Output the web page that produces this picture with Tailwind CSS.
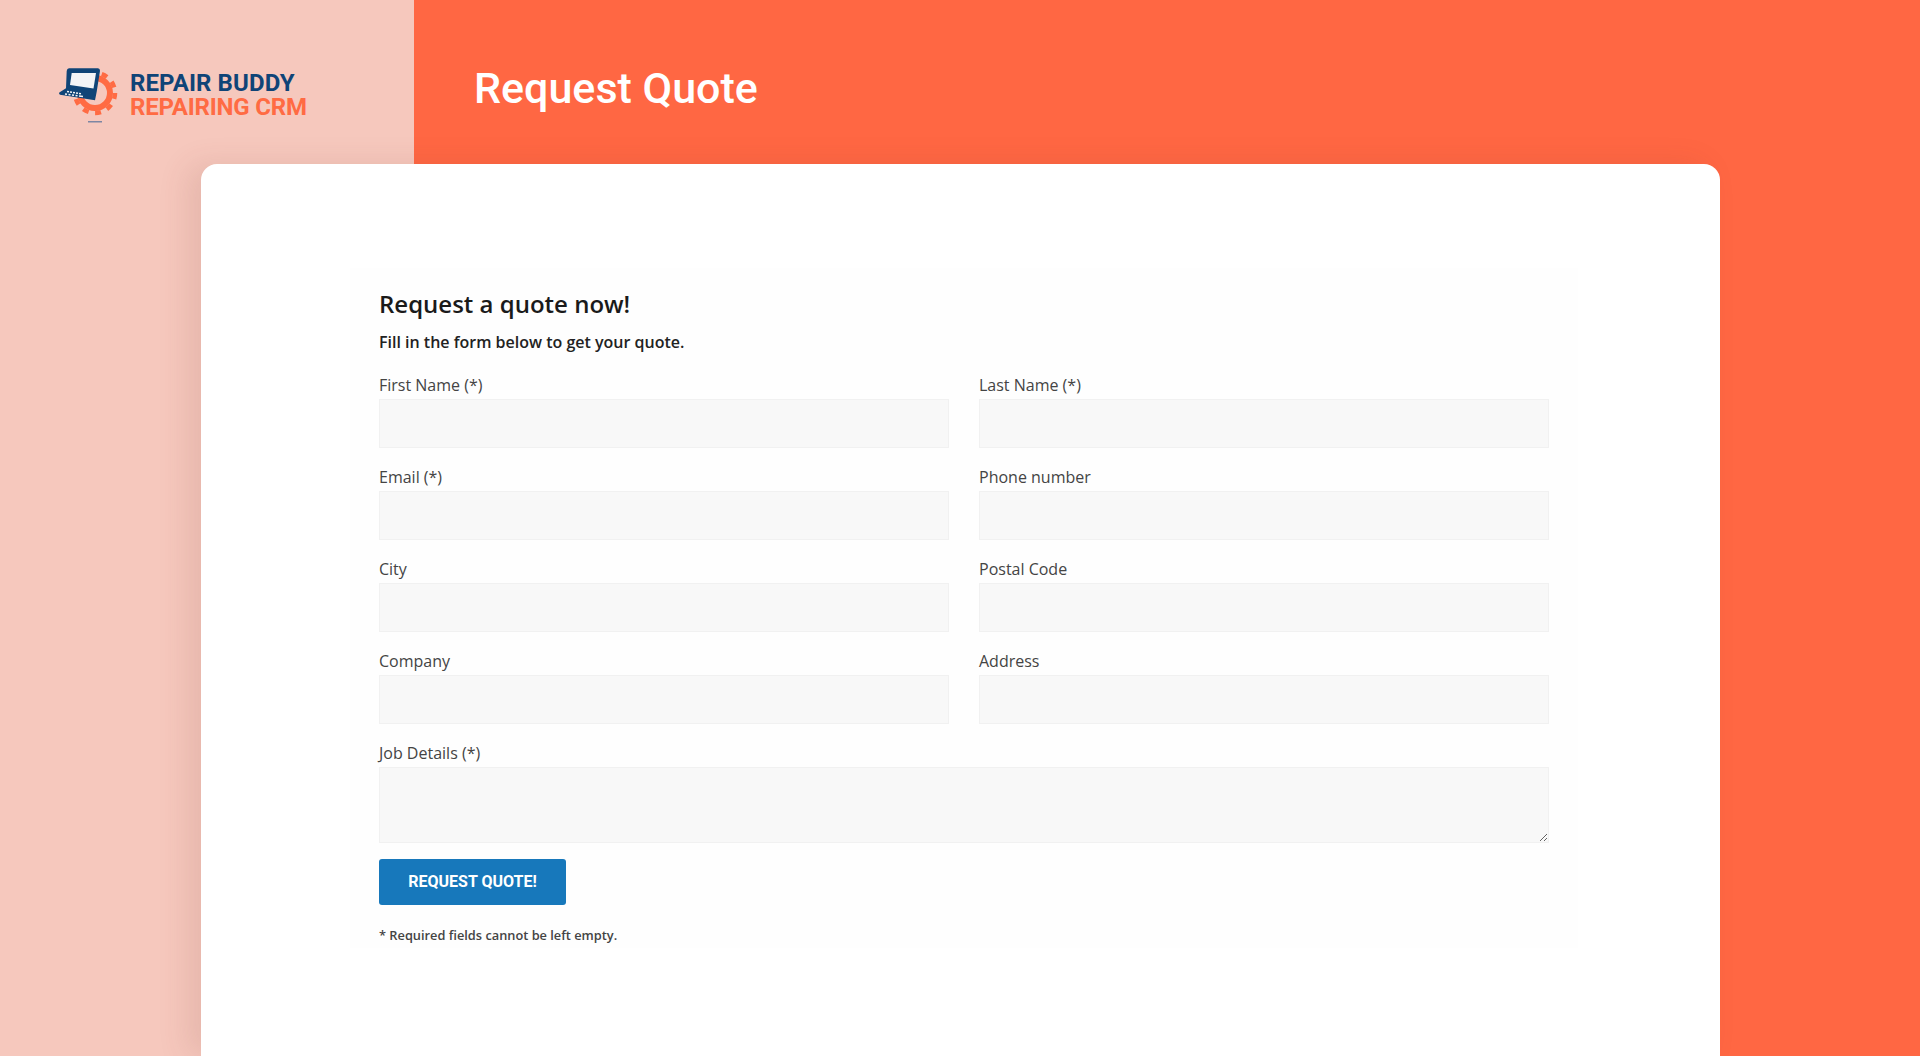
<!doctype html>
<html>

<head>
	<meta charset="UTF-8">
	<meta name="viewport" content="width=device-width, initial-scale=1.0">
	<script src="https://cdn.jsdelivr.net/npm/@tailwindcss/browser@4"></script>
</head>

<body class="h-[1056px] overflow-hidden font-['Open_Sans',sans-serif] bg-[linear-gradient(to_right,#f6c8bd_414px,#ff6743_414px)]">
	<!--header: logo on the pale side, page title on the orange side-->
	<header class="flex h-[164px]">
		<div class="w-[414px] pl-[58px] pt-[67px] flex items-start">
			<svg class="w-[62px] h-[58px] shrink-0" viewBox="0 0 62 58">
				<circle cx="37" cy="26" r="15" fill="none" stroke="#ff6b43" stroke-width="6"/>
				<circle cx="37" cy="26" r="20" fill="none" stroke="#ff6b43" stroke-width="4.500" stroke-dasharray="6 6.560"/>
				<path d="M11 1.300H40q2 0 2 2.500l-3.300 21-1.700 8.500-35-5.500q-1.500-1-.7-2.300L8 21.300 8.700 4q.3-2.700 2.300-2.700z" fill="#0f4477"/>
				<path d="M13.700 6H38L35.500 21.500 12 18z" fill="#f3f4f6"/>
				<path d="M9 24.500l2 .3m1 .2l2 .3m1 .2l2 .3m1 .2l2 .3m1 .2l2 .3M7 27l2 .3m1.500 .2l2 .3m1.500 .2l2 .3m1.500 .2l2 .3m1.500 .2l4 .5" stroke="#f3f4f6" stroke-width="1.600" fill="none"/>
				<rect x="30" y="54" width="14" height="1.500" fill="#7d86a3"/>
			</svg>
			<div class="ml-[10px] mt-[4px] font-['Roboto',sans-serif] font-bold text-[24px] leading-[24px]">
				<div class="text-[#0f4477] tracking-[0.1px]">REPAIR BUDDY</div>
				<div class="text-[#ff6b43] tracking-[-0.2px]">REPAIRING CRM</div>
			</div>
		</div>
		<h1 class="pl-[60px] pt-[60px] font-['Roboto',sans-serif] font-medium text-[43px] leading-[56px] text-white">Request Quote</h1>
	</header>

	<!--white card, hangs over both background colours-->
	<main class="ml-[201px] w-[1519px] h-[892px] rounded-t-[16px] bg-white shadow-[-14px_0_30px_rgba(120,60,50,0.12)] pt-[104px] pl-[149px]">
		<form class="w-[1228px] h-[680px] bg-[#fefefe] px-[29px] pt-[20px]">
			<h2 class="text-[24px] leading-[32px] font-semibold text-[#1a1a1a]">Request a quote now!</h2>
			<p class="mt-[10px] text-[16px] leading-[24px] font-semibold text-[#222]">Fill in the form below to get your quote.</p>

			<div class="mt-[19px] grid grid-cols-2 gap-x-[30px] gap-y-[17px]">
				<div>
					<label class="block pb-[2px] text-[16px] leading-[24px] text-[#444]">First Name (*)</label>
					<input class="block w-full h-[49px] bg-[#f8f8f8] border border-[#f1f1f1]">
				</div>
				<div>
					<label class="block pb-[2px] text-[16px] leading-[24px] text-[#444]">Last Name (*)</label>
					<input class="block w-full h-[49px] bg-[#f8f8f8] border border-[#f1f1f1]">
				</div>
				<div>
					<label class="block pb-[2px] text-[16px] leading-[24px] text-[#444]">Email (*)</label>
					<input class="block w-full h-[49px] bg-[#f8f8f8] border border-[#f1f1f1]">
				</div>
				<div>
					<label class="block pb-[2px] text-[16px] leading-[24px] text-[#444]">Phone number</label>
					<input class="block w-full h-[49px] bg-[#f8f8f8] border border-[#f1f1f1]">
				</div>
				<div>
					<label class="block pb-[2px] text-[16px] leading-[24px] text-[#444]">City</label>
					<input class="block w-full h-[49px] bg-[#f8f8f8] border border-[#f1f1f1]">
				</div>
				<div>
					<label class="block pb-[2px] text-[16px] leading-[24px] text-[#444]">Postal Code</label>
					<input class="block w-full h-[49px] bg-[#f8f8f8] border border-[#f1f1f1]">
				</div>
				<div>
					<label class="block pb-[2px] text-[16px] leading-[24px] text-[#444]">Company</label>
					<input class="block w-full h-[49px] bg-[#f8f8f8] border border-[#f1f1f1]">
				</div>
				<div>
					<label class="block pb-[2px] text-[16px] leading-[24px] text-[#444]">Address</label>
					<input class="block w-full h-[49px] bg-[#f8f8f8] border border-[#f1f1f1]">
				</div>
				<div class="col-span-2">
					<label class="block pb-[2px] text-[16px] leading-[24px] text-[#444]">Job Details (*)</label>
					<textarea class="block w-full h-[76px] bg-[#f8f8f8] border border-[#f1f1f1]"></textarea>
				</div>
			</div>

			<button type="button" class="mt-[16px] block w-[187px] h-[46px] rounded-[3px] bg-[#1778bb] font-['Roboto',sans-serif] font-bold text-[16px] text-white">REQUEST QUOTE!</button>
			<p class="mt-[20px] text-[12.800px] leading-[20px] font-semibold text-[#444]">* Required fields cannot be left empty.</p>
		</form>
	</main>
</body>
</html>
